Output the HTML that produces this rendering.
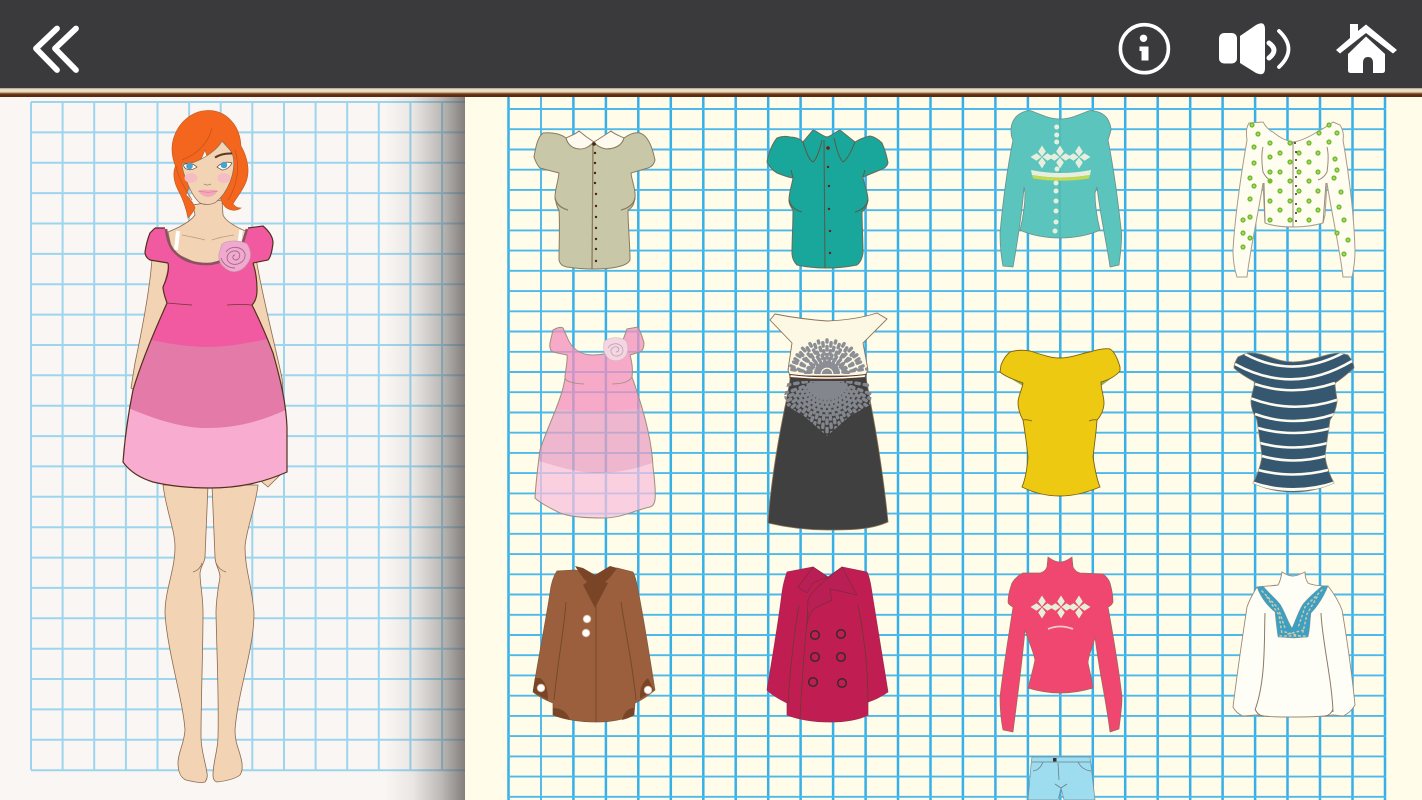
<!DOCTYPE html>
<html lang="en">
<head>
<meta charset="utf-8">
<title>Dress up</title>
<style>
html,body{margin:0;padding:0;width:1422px;height:800px;overflow:hidden;background:#fffce9}
svg{display:block;position:absolute;left:0;top:0}
</style>
</head>
<body>
<svg width="1422" height="800" viewBox="0 0 1422 800" xmlns="http://www.w3.org/2000/svg">
<defs>
<linearGradient id="sh" x1="0" x2="1" y1="0" y2="0">
<stop offset="0" stop-color="#5c5755" stop-opacity="0"/>
<stop offset=".35" stop-color="#5c5755" stop-opacity=".1"/>
<stop offset=".7" stop-color="#5c5755" stop-opacity=".38"/>
<stop offset="1" stop-color="#5c5755" stop-opacity=".75"/>
</linearGradient>
<linearGradient id="strip" x1="0" x2="0" y1="0" y2="1">
<stop offset="0" stop-color="#a89c88"/>
<stop offset=".2" stop-color="#efe6d2"/>
<stop offset=".45" stop-color="#e3d3b6"/>
<stop offset=".6" stop-color="#8a5a30"/>
<stop offset=".75" stop-color="#5f2c10"/>
<stop offset="1" stop-color="#5a2a10"/>
</linearGradient>
<g id="fl4"><path d="M0-.5L3.800-5.500 0-11.500-3.800-5.500ZM0 .5L3.800 5.500 0 11.500-3.800 5.500ZM.5 0L5.500-3.800 11.500 0 5.500 3.800ZM-.5 0L-5.500-3.800-11.500 0-5.500 3.800Z"/></g>
<clipPath id="c5"><path d="M553 330Q560 326 563 328L567 337C572 350 582 355 593 355C608 355 620 350 623 340L627 329L638 327Q642 335 644 343Q644 350 640 352L630 355C632 362 633 370 632 377C642 405 652 440 653 467Q656 490 655 500Q654 506 650 507C632 511 622 518 603 518C585 518 570 517 560 513C550 508 540 503 535 498C536 480 538 465 540 450C548 425 562 400 565 378C565 370 568 362 567 355L553 352Q549 350 550 343Z"/></clipPath>
<clipPath id="c6up"><path d="M770 320L775 314Q800 319 827 321Q855 320 877 313L887 319L863 343L868 370L865 374H790L788 370L792 343Z"/></clipPath>
<clipPath id="c6dn"><path d="M788 381H868L872 395L870 405L850 416L827 436L804 416L787 406L784 396Z"/></clipPath>
<clipPath id="cg"><path d="M155 228H165C166 236 168 244 172 250C182 262 195 265 207 265C222 265 236 255 243 243L248 228L263 226C270 232 273 238 273 243C272 252 270 258 268 260L253 263C256 272 257 282 257 290C257 297 255 302 252 305C262 325 268 340 273 353C282 385 286 405 287 427L287 472C262 483 238 488 210 488C190 488 170 486 153 482C140 478 130 472 123 462C125 435 129 410 133 390C142 360 155 330 167 303C165 297 163 292 163 287C165 280 168 270 168 263L150 260Q145 257 145 252C146 245 148 238 150 233Z"/></clipPath>
<clipPath id="cs"><path d="M1247 353C1265 352 1275 362 1293 362C1312 362 1325 353 1340 353L1348 355C1352 360 1354 364 1354 368C1345 376 1340 380 1335 383C1335 390 1337 396 1337 402C1336 410 1333 416 1330 420C1328 435 1326 445 1325 457C1327 468 1330 476 1334 483C1320 489 1308 492 1293 492C1278 492 1265 489 1253 483C1257 476 1260 468 1262 457C1261 445 1259 435 1257 420C1254 415 1251 408 1251 402C1251 395 1254 388 1255 382C1248 378 1240 374 1234 368C1234 364 1236 360 1238 357Z"/></clipPath>
</defs>

<!-- pages -->
<rect x="0" y="90" width="465" height="710" fill="#f9f6f3"/>
<rect x="465" y="90" width="957" height="710" fill="#fffce9"/>

<!-- left grid -->
<path fill="none" stroke="#9dd5ee" stroke-width="2" d="M31 102V770M62.6 102V770M94.2 102V770M125.9 102V770M157.5 102V770M189.1 102V770M220.7 102V770M252.3 102V770M284 102V770M315.6 102V770M347.2 102V770M378.8 102V770M410.4 102V770M442.1 102V770M31 102H465M31 132.4H465M31 162.7H465M31 193.1H465M31 223.5H465M31 253.9H465M31 284.2H465M31 314.6H465M31 345H465M31 375.3H465M31 405.7H465M31 436.1H465M31 466.4H465M31 496.8H465M31 527.2H465M31 557.6H465M31 587.9H465M31 618.3H465M31 648.7H465M31 679H465M31 709.4H465M31 739.8H465M31 770.2H465"/>
<rect x="385" y="90" width="80" height="710" fill="url(#sh)"/>

<!-- right grid -->
<path fill="none" stroke="#36b0e8" stroke-width="2.500" d="M508.5 97V800M573.4 97V800M638.3 97V800M703.3 97V800M768.2 97V800M833.1 97V800M898 97V800M962.9 97V800M1027.9 97V800M1092.8 97V800M1157.7 97V800M1222.6 97V800M1287.5 97V800M1352.5 97V800M1385 97V800M605.9 97V800M670.8 97V800M735.7 97V800M800.6 97V800M865.6 97V800M930.5 97V800M995.4 97V800M1060.3 97V800M1125.2 97V800M1190.2 97V800M1255.1 97V800M1320 97V800"/>
<path fill="none" stroke="#4cb9ea" stroke-width="1.900" d="M541 97V800M508 109H1386M508 129.2H1386M508 149.5H1386M508 169.7H1386M508 189.9H1386M508 210.2H1386M508 230.4H1386M508 250.6H1386M508 270.8H1386M508 291.1H1386M508 311.3H1386M508 331.5H1386M508 351.8H1386M508 372H1386M508 392.2H1386M508 412.5H1386M508 432.7H1386M508 452.9H1386M508 473.1H1386M508 493.4H1386M508 513.6H1386M508 533.8H1386M508 554.1H1386M508 574.3H1386M508 594.5H1386M508 614.8H1386M508 635H1386M508 655.2H1386M508 675.4H1386M508 695.7H1386M508 715.9H1386M508 736.1H1386M508 756.4H1386M508 776.6H1386M508 796.8H1386"/>

<!-- top bar -->
<rect x="0" y="0" width="1422" height="88.500" fill="#3a3a3c"/>
<rect x="0" y="88" width="1422" height="9" fill="url(#strip)"/>

<!-- back icon -->
<path fill="none" stroke="#fff" stroke-width="5.800" stroke-linecap="round" stroke-linejoin="round" d="M57 28.500L36 48.500 57 70M76 28.500L55 48.500 76 70"/>
<!-- info icon -->
<circle cx="1144.400" cy="48.700" r="24" fill="none" stroke="#fff" stroke-width="3.600"/>
<circle cx="1143.500" cy="38.300" r="3.700" fill="#fff"/>
<path fill="#fff" d="M1139.500 46.500H1148.500V60.500H1141.500V51H1139.500Z"/>
<!-- speaker icon -->
<rect x="1219" y="33" width="18" height="30.500" rx="5" fill="#fff"/>
<path fill="#fff" d="M1240 36L1256 25Q1265 20 1265 29V68Q1265 77 1256 73L1240 63Z"/>
<path fill="none" stroke="#fff" stroke-width="5" stroke-linecap="round" d="M1269 43Q1279 50 1269 58"/>
<path fill="none" stroke="#fff" stroke-width="3.800" stroke-linecap="round" d="M1279 31Q1298 49 1279 67"/>
<!-- home icon -->
<path fill="#fff" d="M1336 50L1350 38V24H1358V31L1366 24.500 1397 50 1393 53.500 1366 33 1340 53.500Z"/>
<path fill="#fff" d="M1348 54L1366 36.500 1385 54V70.500Q1385 73 1382 73H1373V63Q1373 57 1368 57 1363 57 1363 63V73H1351Q1348 73 1348 70.500Z"/>

<!-- GIRL -->
<g stroke="#8b6a50" stroke-width=".8" fill="#f2d3b3">
<!-- arms -->
<path d="M152 258C150 290 142 330 135 363L131 388L150 400L190 320L180 255Z"/>
<path d="M256 258C262 295 275 345 282 378C284 395 282 410 280 420C285 440 287 460 285 470L268 487L262 482L235 400L230 300L240 258Z"/>
<!-- legs -->
<path d="M163 485C166 510 175 530 175 547C175 570 165 590 165 613C167 650 183 700 185 730C184 745 178 752 178 763C178 772 181 778 186 780C194 782 202 783 205 782Q208 778 207 773C205 760 201 750 201 737C201 700 203 650 203 613C203 595 200 585 200 573C201 565 205 562 205 557L208 485Z"/>
<path d="M212 485L215 557C215 565 220 570 220 577C218 590 216 600 216 613C217 660 219 700 218 737C218 750 213 762 213 775Q213 781 217 782C225 781 235 779 240 775C243 770 242 767 242 763C240 750 235 745 235 730C238 690 254 650 254 613C252 585 245 570 245 547C246 530 255 510 258 485Z"/>
<!-- neck / chest -->
<path d="M193 205L195 215C190 222 178 228 168 232L172 252L207 268L245 245L248 232C238 228 226 222 223 215L222 200Z"/>
</g>
<path fill="none" stroke="#8b6a50" stroke-width=".7" d="M193 572Q200 570 202 563M226 572Q219 570 216 563"/>
<path d="M178 231L176 250" stroke="#fff" stroke-width="4" fill="none"/>
<path d="M241 230L239 246" stroke="#fff" stroke-width="3.500" fill="none"/>
<path d="M182 235Q198 238 205 240M234 235Q220 237 212 240" stroke="#b59a80" stroke-width=".7" fill="none"/>
<!-- hair back -->
<path fill="#f4661e" stroke="#b95a22" stroke-width=".6" d="M207 110.500C226 110 240 125 241 146C248 158 250 172 246 182C242 192 236 198 233 204Q236 208 241 208C235 212 226 211 222 202L205 150 186 195C191 200 194 204 195 208C193 212 191 215 188 218C186 208 182 197 178 190C173 180 173 172 175.500 166C171 155 171 146 174 137C179 122 192 111 207 110.500Z"/>
<!-- face -->
<path fill="#f2d3b3" stroke="#8b6a50" stroke-width=".7" d="M182 163C190 165 198 161 205 157C213 152 219 147 222 141C227 147 232 151 233 156C235 165 233 174 230 182C226 192 221 198 216 202C212 205 204 205 200 203C194 198 190 190 187 182C184 175 182 169 182 163Z"/>
<path fill="none" stroke="#c2521a" stroke-width=".7" d="M182 160C195 155 208 145 212 128M176 166C178 178 186 190 192 200M235 150C240 165 238 185 228 200"/>
<ellipse cx="191" cy="178" rx="6.500" ry="5" fill="#f6bcc3"/>
<ellipse cx="224" cy="178" rx="6.500" ry="5" fill="#f6bcc3"/>
<path fill="#fff" stroke="#6b4a32" stroke-width=".7" d="M183 165Q190 161 197 167Q190 172 185 168Z"/>
<path fill="#fff" stroke="#6b4a32" stroke-width=".7" d="M217 167Q224 160 232 163Q228 170 222 170Z"/>
<circle cx="189.500" cy="166" r="3.300" fill="#4aa3cf"/>
<circle cx="224" cy="165" r="3.300" fill="#4aa3cf"/>
<path d="M215 157.500Q222 153 232 153.500" stroke="#5b3a22" stroke-width="2" fill="none"/>
<path d="M204 184Q207 186 211 184" stroke="#a58468" stroke-width=".8" fill="none"/>
<path fill="#f6a8bb" d="M198 190.500Q203 189 208 190 213 189 218 190.500Q214 197 208 197 202 197 198 190.500Z"/>
<path d="M198.500 191.500Q208 193 217.500 191.500" stroke="#c8708a" stroke-width=".5" fill="none"/>
<!-- dress -->
<g clip-path="url(#cg)">
<rect x="115" y="220" width="180" height="275" fill="#f159a0"/>
<path d="M115 332C150 340 180 347 207 347C230 347 250 343 290 334V440H115Z" fill="#e47aa8"/>
<path d="M115 402C150 418 180 428 207 428C235 428 260 422 290 408V495H115Z" fill="#f7acd0"/>
</g>
<path fill="none" stroke="#54301e" stroke-width="1.200" d="M155 228H165M248 228L263 226C270 232 273 238 273 243C272 252 270 258 268 260L253 263M252 305C262 325 268 340 273 353C282 385 286 405 287 427L287 472C262 483 238 488 210 488C190 488 170 486 153 482C140 478 130 472 123 462C125 435 129 410 133 390C142 360 155 330 167 303M168 263L150 260Q145 257 145 252C146 245 148 238 150 233L155 228M168 263Q170 272 163 287C163 292 165 297 167 303M253 263C256 272 257 282 257 290C257 297 255 302 252 305"/>
<path fill="none" stroke="#8a5360" stroke-width="2.600" d="M166 229C167 237 169 245 173 250C182 261 195 264 207 264C222 264 236 254 243 242L247 229"/>
<path fill="none" stroke="#6d3a2a" stroke-width=".8" d="M167 303Q178 304 192 305M252 305Q242 304 227 305"/>
<!-- rose -->
<path fill="#f2a9cf" stroke="#c7a0b0" stroke-width=".7" d="M222 244C228 240 240 240 247 244C251 250 252 258 247 264C243 270 235 274 228 270C222 266 218 262 219 254Z"/>
<path fill="none" stroke="#9c6a85" stroke-width=".9" d="M226 252C230 245 243 246 245 254C246 262 236 267 230 263C224 259 228 250 236 251C241 252 241 259 236 260C232 260 232 255 235 255M221 258C223 264 228 268 235 268"/>

<!-- 1 SAGE SHIRT -->
<path fill="#fffaf0" stroke="#8a7a60" stroke-width="1" d="M566 138C570 136 576 134 579 131Q586 137 594 142Q602 137 611 131C614 134 620 136 624 138C622 146 614 149 606 149C600 148 596 145 594 142C590 146 586 149 580 149C574 149 568 146 566 138Z"/>
<path fill="#c8c8a8" stroke="#8a7a60" stroke-width="1" d="M543 133C552 132 561 134 566 138C568 146 574 149 580 149C586 149 590 146 594 142C596 145 600 148 606 149C614 149 622 146 624 138C630 134 636 132 640 133C648 136 652 146 655 160C654 165 651 167 648 168L631 173C632 182 636 190 635 197C634 205 632 208 628 210C628 225 630 245 630 260C628 264 622 266 617 267C608 269 600 269 592 269C583 269 574 268 567 267C562 266 560 264 559 260C559 245 560 225 559 210C557 208 556 203 555 197C555 190 558 182 559 173L540 168C537 165 535 160 534 157C536 145 538 137 543 133Z"/>
<path fill="none" stroke="#8a7a5a" stroke-width="1.300" d="M593 142L592 269M555 198Q557 207 568 210M635 198Q633 207 621 210"/>
<g fill="#4a2418"><circle cx="594" cy="144" r="1.800"/><circle cx="595" cy="153" r="1.200"/><circle cx="595" cy="163" r="1.200"/><circle cx="595" cy="173" r="1.200"/><circle cx="595" cy="183" r="1.200"/><circle cx="596" cy="194" r="1.200"/><circle cx="596" cy="206" r="1.200"/><circle cx="596" cy="217" r="1.200"/><circle cx="596" cy="228" r="1.200"/><circle cx="596" cy="239" r="1.200"/><circle cx="596" cy="249" r="1.200"/><circle cx="596" cy="261" r="1.200"/></g>

<!-- 2 TEAL SHIRT -->
<path fill="#1aa79b" stroke="#6a6a58" stroke-width="1" d="M777 138C782 136 786 136 790 137C795 137 800 139 803 142L813 130C817 131 822 136 827 137C832 136 837 131 840 130L855 142C860 139 865 137 870 136C875 137 879 140 882 143C885 150 887 157 888 163C887 167 883 169 880 170L863 177C864 185 868 192 868 200C867 206 865 210 862 212C862 225 863 240 863 253C862 259 860 263 857 265C847 267 837 268 827 268C817 268 806 267 797 265C794 262 792 258 792 253C792 240 793 225 793 210C791 207 789 204 789 200C789 192 792 185 793 178C787 177 782 175 777 173C772 170 769 166 767 162C769 152 772 144 777 138Z"/>
<path fill="none" stroke="#5a5a46" stroke-width="1" d="M803 142C806 152 809 160 813 162C816 160 820 150 822 140M855 142C851 152 847 160 843 162C840 160 836 148 834 138M824 140L825 268M789 200Q791 209 802 212M868 200Q866 209 855 212M793 178L791 170M863 177L865 170"/>
<g fill="#6b2016"><circle cx="828" cy="148" r="1.800"/><circle cx="828" cy="167" r="1.200"/><circle cx="829" cy="186" r="1.200"/><circle cx="829" cy="209" r="1.200"/><circle cx="830" cy="231" r="1.200"/><circle cx="830" cy="253" r="1.200"/></g>

<!-- 3 TURQUOISE SWEATER -->
<path fill="#5ac4bd" stroke="#6e8f8a" stroke-width=".8" d="M1030 110.500C1038 113 1048 119 1060 119C1072 119 1082 113 1090 110.500C1098 111 1104 114 1107 118C1110 123 1111 126 1111 130C1110 134 1109 137 1108 140C1113 165 1118 200 1121.500 233C1122 245 1120 256 1119 265L1110 267C1108 250 1100 215 1097 187L1095 193C1095 205 1097 218 1100 230C1090 235 1075 238 1060 238C1045 238 1030 235 1020 230C1023 218 1025 205 1025 193L1024 187C1022 215 1016 250 1013 267L1003 266C1001 256 1000 245 1000 233C1003 200 1008 165 1013 140C1011 137 1011 133 1011 130C1011 126 1012 122 1015 118C1019 113 1024 111 1030 110.500Z"/>
<path d="M1060 119V238" stroke="#4da9a3" stroke-width=".7" fill="none"/>
<path fill="#e8eedd" d="M1031 170Q1060 176 1091 170L1090 175Q1060 180 1032 175Z"/>
<path fill="#c3d94f" d="M1032 175Q1060 180 1090 175L1089 178.500Q1060 183 1033 178.500Z"/>
<g fill="#e8eedd">
<use href="#fl4" x="1042" y="157"/><use href="#fl4" x="1060" y="157"/><use href="#fl4" x="1079" y="157"/>
<circle cx="1056.700" cy="127" r="2.500"/><circle cx="1056.700" cy="135" r="2.500"/><circle cx="1056.700" cy="142" r="2.500"/><circle cx="1057" cy="169" r="2.500"/><circle cx="1056" cy="183" r="2.500"/><circle cx="1056" cy="191" r="2.500"/><circle cx="1056" cy="201" r="2.500"/><circle cx="1056" cy="211" r="2.500"/><circle cx="1056" cy="222" r="2.500"/><circle cx="1055" cy="231" r="2.500"/>
</g>

<!-- 4 CREAM GREEN FLOWERS -->
<path fill="#fffdf0" stroke="#a89c8c" stroke-width="1" d="M1249 123L1263 122C1266 127 1270 131 1273 132C1280 138 1286 141 1293 142C1301 141 1309 137 1317 132C1325 128 1330 124 1333 122L1340 125C1343 130 1344 135 1343 140C1349 175 1354 215 1355 250C1355 260 1354 268 1352 277H1343C1340 250 1332 215 1327 183L1325 215 1323 223C1313 226 1303 227 1293 227C1283 227 1273 226 1265 223L1263 183C1258 215 1250 250 1247 277H1237C1234 268 1233 260 1233 250C1235 215 1241 175 1247 140C1246 133 1246 128 1249 123Z"/>
<path fill="none" stroke="#9a8a78" stroke-width="1" d="M1293 142V227M1263 147C1261 155 1262 165 1263 172Q1266 178 1270 180M1327 147C1329 155 1328 165 1327 172Q1324 178 1318 180M1264 183L1265 223M1326 183L1323 223"/>
<path fill="none" stroke="#74bd2e" stroke-width="5.200" stroke-linecap="round" d="M1252 125h0M1258 134h0M1254 147h0M1254 163h0M1270 143h0M1270 157h0M1270 172h0M1270 181h0M1280 153h0M1280 172h0M1280 191h0M1270 201h0M1270 220h0M1280 210h0M1290 143h0M1290 162h0M1290 181h0M1290 201h0M1290 220h0M1299 153h0M1299 172h0M1299 191h0M1299 210h0M1309 143h0M1309 162h0M1309 181h0M1309 201h0M1309 220h0M1318 153h0M1318 172h0M1318 191h0M1318 210h0M1319 133h0M1329 142h0M1329 125h0M1337 133h0M1335 159h0M1337 170h0M1334 178h0M1341 192h0M1339 207h0M1344 220h0M1337 233h0M1348 240h0M1344 254h0M1250 178h0M1254 186h0M1250 199h0M1243 220h0M1250 217h0M1243 233h0M1250 238h0M1243 247h0"/>
<path fill="none" stroke="#e4f2ca" stroke-width="1.500" stroke-linecap="round" d="M1252 125h0M1258 134h0M1254 147h0M1254 163h0M1270 143h0M1270 157h0M1270 172h0M1280 153h0M1280 172h0M1280 191h0M1270 201h0M1270 220h0M1280 210h0M1290 143h0M1290 162h0M1290 181h0M1290 201h0M1290 220h0M1299 153h0M1299 172h0M1299 191h0M1299 210h0M1309 143h0M1309 162h0M1309 181h0M1309 201h0M1309 220h0M1318 153h0M1318 172h0M1318 191h0M1318 210h0M1319 133h0M1329 142h0M1329 125h0M1337 133h0M1335 159h0M1337 170h0M1334 178h0M1341 192h0M1339 207h0M1344 220h0M1337 233h0M1348 240h0M1344 254h0M1250 178h0M1254 186h0M1250 199h0M1243 220h0M1250 217h0M1243 233h0M1250 238h0M1243 247h0"/>
<g fill="#3a2a22"><circle cx="1295" cy="143" r="1"/><circle cx="1296" cy="152" r="1"/><circle cx="1296" cy="160" r="1"/><circle cx="1296" cy="168" r="1"/><circle cx="1296" cy="177" r="1"/><circle cx="1296" cy="186" r="1"/><circle cx="1296" cy="194" r="1"/><circle cx="1296" cy="204" r="1"/><circle cx="1296" cy="213" r="1"/><circle cx="1296" cy="221" r="1"/></g>

<!-- 5 PINK DRESS (translucent) -->
<g clip-path="url(#c5)" opacity=".75">
<rect x="530" y="320" width="130" height="95" fill="#f48fbb"/>
<path d="M530 405Q597 418 660 405V480H530Z" fill="#e9a0c3"/>
<path d="M530 458C560 468 580 473 597 473C620 473 640 468 660 460V525H530Z" fill="#f8c1dc"/>
</g>
<path fill="none" stroke="#9c8f7e" stroke-width="1" d="M553 330Q560 326 563 328L567 337C572 350 582 355 593 355C608 355 620 350 623 340L627 329L638 327Q642 335 644 343Q644 350 640 352L630 355C632 362 633 370 632 377C642 405 652 440 653 467Q656 490 655 500Q654 506 650 507C632 511 622 518 603 518C585 518 570 517 560 513C550 508 540 503 535 498C536 480 538 465 540 450C548 425 562 400 565 378C565 370 568 362 567 355L553 352Q549 350 550 343Z"/>
<path fill="none" stroke="#9c8f7e" stroke-width=".8" d="M565 378Q566 383 584 384M632 377Q628 384 612 384"/>
<path fill="#f4d5e2" stroke="#d6b8c4" stroke-width=".6" d="M604 342C608 337 620 336 626 341C629 347 628 354 624 358C620 361 612 362 608 358C604 354 603 348 604 342Z"/>
<path fill="none" stroke="#b99aa8" stroke-width=".7" d="M608 348C611 342 622 342 623 350C623 356 615 358 612 354C609 350 613 346 617 347C620 348 619 352 616 352"/>

<!-- 6 BLACK DRESS -->
<path fill="#404040" stroke="#8a7358" stroke-width=".8" d="M790 377L866 377C867 385 869 392 870 400C878 440 885 490 888 522C870 530 850 530 827 530C805 530 785 527 768 523C771 480 780 430 787 397C788 390 790 384 790 377Z"/>
<path fill="#fdf8e3" stroke="#8a7358" stroke-width=".9" d="M770 320L775 314Q800 319 827 321Q855 320 877 313L887 319L863 343L868 370L865 376H790L788 370L792 343Z"/>
<g clip-path="url(#c6up)" fill="none" stroke="#8b8f95" stroke-width="3.400" stroke-linecap="round">
<path stroke-dasharray="3.500 4.500" d="M827 374V340M827 374L835.700 341M827 374L818.300 341M827 374L844.100 343.600M827 374L809.900 343.600M827 374L851.700 348M827 374L802.300 348M827 374L858.200 353.900M827 374L795.800 353.900M827 374L863.400 361M827 374L790.600 361M827 374L867 369M827 374L787 369"/>
<path stroke-dasharray="3.500 4.500" d="M829.100 362.100L831.400 340.200M824.900 362.100L822.600 340.200M833.200 363L840 342.100M820.800 363L814 342.100M837 364.700L848 345.600M817 364.700L806 345.600M840.400 367.100L855.100 350.800M813.600 367.100L798.900 350.800M843.200 370.200L861 357.300M810.800 370.200L793 357.300M845.300 373.900L865.400 364.900M808.700 373.900L788.600 364.900"/>
</g>
<g clip-path="url(#c6dn)" fill="none" stroke="#83868c" stroke-width="3.400" stroke-linecap="round">
<path stroke-dasharray="3.400 5" d="M827 378V448M827 378L839.200 446.900M827 378L814.800 446.900M827 378L850.900 443.800M827 378L803.100 443.800M827 378L862 438.600M827 378L792 438.600M827 378L872 431.600M827 378L782 431.600M827 378L880.600 423M827 378L773.400 423M827 378L887.600 413M827 378L766.400 413M827 378L892.800 401.900M827 378L761.200 401.900"/>
<path stroke-dasharray="3.400 5" stroke-dashoffset="4.200" d="M827 378L833 448M827 378L821 448M827 378L845 445M827 378L809 445M827 378L856 441M827 378L798 441M827 378L867 435M827 378L787 435M827 378L876 427M827 378L778 427M827 378L884 418M827 378L770 418M827 378L890 408M827 378L764 408M827 378L895 390M827 378L759 390"/>
</g>
<path fill="#fff" stroke="#5f3a20" stroke-width=".9" d="M790 374.500Q827 379 866 374.500L865 377.500Q827 381 790 377.500Z"/>

<!-- 7 YELLOW TOP -->
<path fill="#8fae5a" d="M1000 372L1023 386 1024 376ZM1120 372L1101 386 1099 376Z"/>
<path fill="#eec911" stroke="#7e6212" stroke-width=".9" d="M1010 352C1016 350 1024 350 1030 351C1040 354 1050 358 1060 358C1072 358 1082 353 1090 352C1096 350 1104 348 1110 349C1115 352 1118 360 1120 367L1120 371C1115 377 1108 380 1101 382C1101 390 1104 396 1104 403C1104 410 1100 417 1097 420C1096 435 1094 447 1093 457C1095 470 1097 480 1100 487C1088 492 1075 496 1060 496C1045 496 1032 492 1022 487C1025 480 1027 470 1028 457C1027 447 1025 432 1023 420C1020 415 1018 408 1018 403C1018 396 1022 390 1023 383C1015 380 1006 377 1000 372L1001 365C1003 360 1006 355 1010 352Z"/>
<path fill="none" stroke="#7e6212" stroke-width=".8" d="M1023 420Q1027 419 1032 421M1097 420Q1093 419 1089 421"/>

<!-- 8 STRIPED TOP -->
<path fill="#35576f" stroke="#8a7d6a" stroke-width=".8" d="M1247 353C1265 352 1275 362 1293 362C1312 362 1325 353 1340 353L1348 355C1352 360 1354 364 1354 368C1345 376 1340 380 1335 383C1335 390 1337 396 1337 402C1336 410 1333 416 1330 420C1328 435 1326 445 1325 457C1327 468 1330 476 1334 483C1320 489 1308 492 1293 492C1278 492 1265 489 1253 483C1257 476 1260 468 1262 457C1261 445 1259 435 1257 420C1254 415 1251 408 1251 402C1251 395 1254 388 1255 382C1248 378 1240 374 1234 368C1234 364 1236 360 1238 357Z"/>
<g clip-path="url(#cs)" fill="none" stroke="#fdfbf0" stroke-width="2.600">
<path d="M1245 354Q1293 380 1345 352"/>
<path d="M1235 364Q1293 396 1352 361"/>
<path d="M1255 384Q1293 397 1335 383"/>
<path d="M1250 398Q1293 415 1340 399"/>
<path d="M1255 414Q1293 428 1335 414"/>
<path d="M1258 428Q1293 438 1332 428"/>
<path d="M1260 443Q1293 452 1328 443"/>
<path d="M1262 456Q1293 465 1326 456"/>
<path d="M1258 470Q1293 479 1328 470"/>
<path d="M1250 482Q1293 497 1337 482" stroke-width="3"/>
</g>

<!-- 9 BROWN COAT -->
<path fill="#9c5f3e" stroke="#7d5a3e" stroke-width=".7" d="M557 571L575 570 595 575 617 568 633 572C636 578 637 584 638 590C645 625 650 660 655 690C648 696 642 700 635 703L634 715C622 720 610 722 597 722C582 722 566 720 553 715V703C545 700 538 696 533 692C538 660 545 625 550 593C551 584 553 577 557 571Z"/>
<path fill="#7a4526" d="M575 566L583 568 595 575 610 566 617 568C613 574 609 579 605 582L608 583 595 608 583 585 587 582C582 577 578 571 575 566Z"/>
<path fill="#7a4526" d="M535 678L540 678C546 682 548 690 548 700L535 693 533 691ZM648 678L654 690 640 699Q639 685 648 678ZM553 708Q566 708 570 720Q560 718 553 715ZM634 708Q625 708 622 720Q630 718 634 715Z"/>
<path fill="none" stroke="#744a2a" stroke-width="1" d="M596 606V722M566 602C564 630 558 660 554 700M621 602C625 630 632 660 636 700"/>
<g fill="#fff" stroke="#d8b8a0" stroke-width=".8"><circle cx="587" cy="619" r="3.800"/><circle cx="586" cy="633" r="3.800"/><circle cx="541" cy="688" r="3.800"/><circle cx="648" cy="690" r="3.800"/></g>

<!-- 10 RED COAT -->
<path fill="#c01e52" stroke="#9c2a4a" stroke-width=".7" d="M787 572L813 567 828 577 842 567 867 572C870 578 871 586 872 593C877 625 883 660 888 692C882 696 875 700 868 702V715C858 720 845 722 830 722C815 722 800 720 787 715V703C779 699 772 695 767 690C772 660 778 625 782 593C783 585 785 578 787 572Z"/>
<path fill="#b91f55" stroke="#7c2a3e" stroke-width=".7" d="M813 567L798 587 807 593 813 583C820 580 825 578 828 577Z"/>
<path fill="#b91f55" stroke="#7c2a3e" stroke-width=".7" d="M842 567L857 595 830 589 832 600 815 608C810 612 808 618 807 625L808 600C812 590 825 580 842 567Z"/>
<path fill="none" stroke="#6a3a30" stroke-width=".8" d="M808 612C805 640 802 680 800 718M799 605C793 640 790 670 788 705M858 605C865 640 868 670 868 702"/>
<g fill="none" stroke="#3a2a2a" stroke-width="1.500"><circle cx="815" cy="635" r="4.300"/><circle cx="841" cy="634" r="4.300"/><circle cx="815" cy="657" r="4.300"/><circle cx="841" cy="657" r="4.300"/><circle cx="813" cy="682" r="4.300"/><circle cx="842" cy="683" r="4.300"/></g>

<!-- 11 PINK SWEATER -->
<path fill="#ef476f" stroke="#9a6a5a" stroke-width=".7" d="M1048 557C1052 560 1056 562 1060 562C1064 562 1068 560 1072 557L1073 567C1075 571 1077 572 1080 573L1103 574C1107 577 1109 580 1110 583C1112 590 1113 596 1113 602C1112 605 1110 606 1108 607C1114 640 1119 670 1122 697C1122 708 1120 720 1119 729L1110 732C1106 700 1098 665 1095 637C1094 645 1088 655 1088 663C1090 672 1092 680 1093 688C1083 691 1072 693 1060 693C1048 693 1038 691 1028 688C1030 680 1033 670 1035 660C1033 650 1028 640 1025 630C1022 665 1017 700 1013 732L1003 730C1001 720 1000 708 1000 697C1003 670 1008 640 1013 607C1011 606 1008 604 1008 602C1008 595 1010 589 1012 583C1015 578 1019 575 1023 573L1040 573C1044 572 1046 570 1047 567Z"/>
<g fill="#e6f0d8"><use href="#fl4" x="1042" y="607"/><use href="#fl4" x="1061" y="607"/><use href="#fl4" x="1079" y="607"/></g>
<path d="M1048 629Q1060 624 1073 629" stroke="#f3c9c9" stroke-width="1.800" fill="none"/>

<!-- 12 WHITE BLOUSE -->
<path fill="#fffef6" stroke="#9a8a78" stroke-width=".9" d="M1282 572C1285 574 1289 576 1293 576C1297 576 1301 574 1305 572C1305 576 1306 580 1308 583C1312 585 1320 586 1328 586C1335 595 1339 602 1342 610C1348 645 1352 675 1355 705C1352 710 1348 714 1343 716L1333 715C1320 717 1306 717 1293 717C1280 717 1268 717 1257 715L1243 716C1238 714 1235 711 1233 707C1237 675 1242 640 1247 607C1250 598 1254 592 1257 587C1265 586 1272 586 1278 585C1280 582 1281 578 1282 572Z"/>
<path fill="#3d9fc2" stroke="#8a9a90" stroke-width=".5" d="M1257 587L1263 586C1268 592 1275 598 1280 604C1285 612 1288 622 1292 628C1295 622 1298 612 1303 604C1309 597 1316 591 1322 586L1328 586C1324 596 1318 606 1311 613C1310 620 1310 630 1308 637L1294 638 1278 637C1277 630 1276 622 1275 612C1267 606 1260 596 1257 587Z"/>
<path fill="none" stroke="#cfc9a6" stroke-width="1.500" stroke-linecap="round" stroke-dasharray="1.500 3.200" d="M1262 591L1278 608 1285 628M1267 597L1279 615 1282 634M1280 636H1306M1322 590L1305 607 1298 628M1317 597L1307 614 1303 632M1285 632L1300 636M1288 634L1304 630"/>
<path fill="none" stroke="#8a7a68" stroke-width="1" d="M1265 613C1264 640 1266 680 1255 710M1321 613C1322 640 1332 680 1333 712M1255 709Q1258 716 1264 716M1333 709Q1331 715 1325 716"/>

<!-- 13 JEANS -->
<path fill="#9edcf0" stroke="#7a8c90" stroke-width=".7" d="M1032 757H1090L1091 765 1095 800H1064L1061 788 1058 800H1028L1031 765Z"/>
<path fill="none" stroke="#6a8088" stroke-width=".8" d="M1032 762H1090M1058 763L1059 780M1033 771Q1040 770 1043 762M1091 771Q1082 770 1078 762M1055 784L1061 788 1067 784"/>
<rect x="1053" y="758" width="3.500" height="3.500" fill="#333"/>
</svg>
</body>
</html>
